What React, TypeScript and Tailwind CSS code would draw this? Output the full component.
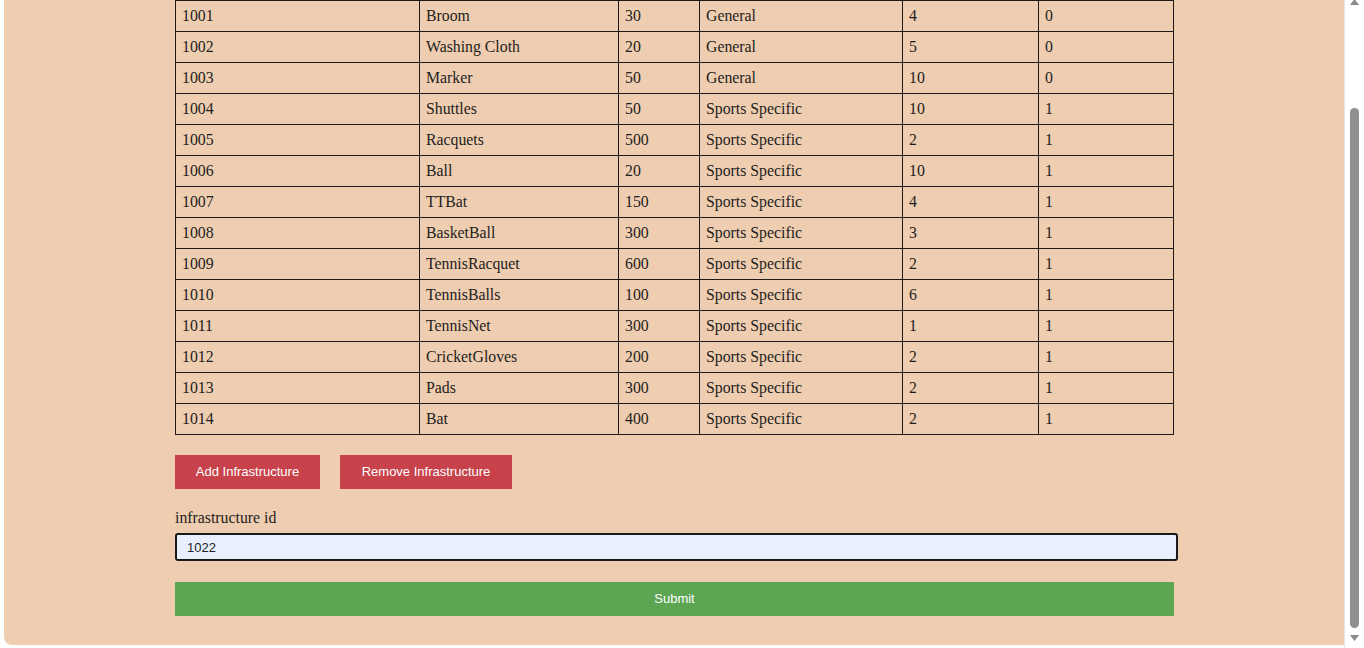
import React from 'react';

type Item = { id: number; name: string; cost: number; kind: string; qty: number; flag: number };

const items: Item[] = [
  { id: 1001, name: 'Broom', cost: 30, kind: 'General', qty: 4, flag: 0 },
  { id: 1002, name: 'Washing Cloth', cost: 20, kind: 'General', qty: 5, flag: 0 },
  { id: 1003, name: 'Marker', cost: 50, kind: 'General', qty: 10, flag: 0 },
  { id: 1004, name: 'Shuttles', cost: 50, kind: 'Sports Specific', qty: 10, flag: 1 },
  { id: 1005, name: 'Racquets', cost: 500, kind: 'Sports Specific', qty: 2, flag: 1 },
  { id: 1006, name: 'Ball', cost: 20, kind: 'Sports Specific', qty: 10, flag: 1 },
  { id: 1007, name: 'TTBat', cost: 150, kind: 'Sports Specific', qty: 4, flag: 1 },
  { id: 1008, name: 'BasketBall', cost: 300, kind: 'Sports Specific', qty: 3, flag: 1 },
  { id: 1009, name: 'TennisRacquet', cost: 600, kind: 'Sports Specific', qty: 2, flag: 1 },
  { id: 1010, name: 'TennisBalls', cost: 100, kind: 'Sports Specific', qty: 6, flag: 1 },
  { id: 1011, name: 'TennisNet', cost: 300, kind: 'Sports Specific', qty: 1, flag: 1 },
  { id: 1012, name: 'CricketGloves', cost: 200, kind: 'Sports Specific', qty: 2, flag: 1 },
  { id: 1013, name: 'Pads', cost: 300, kind: 'Sports Specific', qty: 2, flag: 1 },
  { id: 1014, name: 'Bat', cost: 400, kind: 'Sports Specific', qty: 2, flag: 1 },
];

const td = 'border border-[#1f1a17] px-[6px] py-0 leading-[30px] align-middle';

const App: React.FC = () => {
  return (
    <div className="w-[1364px] h-[648px] bg-white flex overflow-hidden">
      {/* page area */}
      <div className="w-[1344px] h-[648px] pl-[4px] pb-[3px]">
        <div className="h-full bg-[#efcdb0] rounded-bl-[8px]">
          <div className="w-[999px] ml-[171px]">
            <table className="w-[999px] border-collapse table-fixed text-[15.8px] text-[#1e1e1e] font-['Liberation_Serif',serif] border-t border-t-[#2d3452]">
              <colgroup>
                <col className="w-[244px]" />
                <col className="w-[199px]" />
                <col className="w-[81px]" />
                <col className="w-[203px]" />
                <col className="w-[136px]" />
                <col className="w-[135px]" />
              </colgroup>
              <tbody>
                {items.map((it) => (
                  <tr key={it.id}>
                    <td className={td}>{it.id}</td>
                    <td className={td}>{it.name}</td>
                    <td className={td}>{it.cost}</td>
                    <td className={td}>{it.kind}</td>
                    <td className={td}>{it.qty}</td>
                    <td className={td}>{it.flag}</td>
                  </tr>
                ))}
              </tbody>
            </table>

            <div className="flex gap-[20px] mt-[20px] font-['Liberation_Sans',Arial,sans-serif] text-[13px] text-white">
              <button className="h-[34px] w-[145px] bg-[#c7424a]">Add Infrastructure</button>
              <button className="h-[34px] w-[172px] bg-[#c7424a]">Remove Infrastructure</button>
            </div>

            <div className="mt-[19px] text-[15.8px] leading-[20px] text-[#1e1e1e] font-['Liberation_Serif',serif]">
              infrastructure id
            </div>
            <input
              readOnly
              value="1022"
              className="mt-[5px] block w-[1003px] h-[28px] bg-[#e8f0fe] border-2 border-[#1a1a1a] rounded-[3px] px-[10px] text-[13px] text-[#222] font-['Liberation_Sans',Arial,sans-serif] outline-none"
            />
            <button className="mt-[21px] block w-[999px] h-[34px] bg-[#5ba553] text-white text-[13px] font-['Liberation_Sans',Arial,sans-serif]">
              Submit
            </button>
          </div>
        </div>
      </div>

      {/* scrollbar */}
      <div className="w-[20px] h-[648px] bg-white flex flex-col items-center border-l border-[#e6e6e6]">
        <svg width="9" height="6" viewBox="0 0 9 6" className="mt-[-1px]">
          <path d="M0 6 L4.5 0 L9 6 Z" fill="#8a8a8a" />
        </svg>
        <div className="mt-[103px] w-[9px] h-[520px] bg-[#8f8f8f] rounded-full" />
        <svg width="9" height="6" viewBox="0 0 9 6" className="mt-[7px]">
          <path d="M0 0 L9 0 L4.5 6 Z" fill="#8a8a8a" />
        </svg>
      </div>
    </div>
  );
};

export default App;
